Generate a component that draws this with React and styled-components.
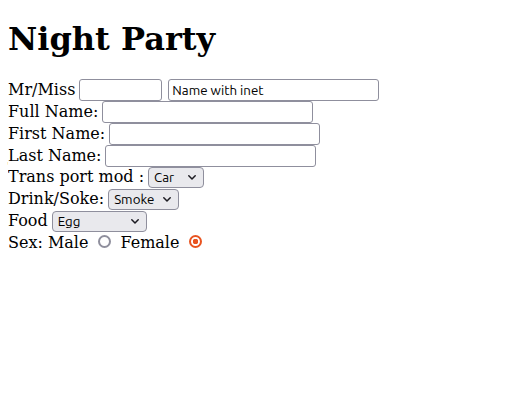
import React from "react";
import styled, { createGlobalStyle } from "styled-components";

const Global = createGlobalStyle`
  body {
    margin: 8px;
    font-family: "DejaVu Serif", serif;
    font-size: 16px;
    color: #000;
    background: #fff;
  }
`;

const Title = styled.h1`
  font-family: "DejaVu Serif", serif;
  font-size: 32px;
  font-weight: bold;
  margin: 12px 0 21px;
`;

const Form = styled.form`
  margin: 0;
  display: flex;
  flex-direction: column;
`;

const Row = styled.div`
  display: flex;
  align-items: baseline;
  gap: 4px;
  height: 22px;
  white-space: pre;
`;

const Label = styled.span`
  font-family: "DejaVu Serif", serif;
  font-size: 16px;
`;

const controlFont = `Ubuntu, "Noto Sans", "DejaVu Sans", sans-serif`;

const TextInput = styled.input`
  box-sizing: border-box;
  width: ${(p) => p.$w}px;
  height: 22px;
  margin: 0 0 0 ${(p) => p.$ml || 0}px;
  padding: 0 3px;
  border: 1px solid #8f8f9d;
  border-radius: 3px;
  background: #fff;
  color: #000;
  font-family: ${controlFont};
  font-size: 13.33px;
  outline: none;
`;

const chevron = encodeURIComponent(
  `<svg xmlns="http://www.w3.org/2000/svg" width="8" height="5" viewBox="0 0 8 5"><path d="M0.8 0.8l3.2 3.2 3.2-3.2" fill="none" stroke="#1c1b22" stroke-width="1.5" stroke-linecap="round" stroke-linejoin="round"/></svg>`
);

const Select = styled.select`
  appearance: none;
  -webkit-appearance: none;
  box-sizing: border-box;
  width: ${(p) => p.$w}px;
  height: 21px;
  margin: 0;
  padding: 0 18px 0 5px;
  border: 1px solid #8f8f9d;
  border-radius: 4px;
  background-color: #e9e9ed;
  background-image: url("data:image/svg+xml,${chevron}");
  background-repeat: no-repeat;
  background-position: right 7px center;
  color: #000;
  font-family: ${controlFont};
  font-size: 13.33px;
  outline: none;
`;

const Radio = styled.input`
  appearance: none;
  -webkit-appearance: none;
  box-sizing: border-box;
  width: 13px;
  height: 13px;
  margin: 0 ${(p) => p.$mr || 0}px 0 ${(p) => p.$ml || 0}px;
  border: 2px solid #8f8f9d;
  border-radius: 50%;
  background: #fff;
  outline: none;

  &:checked {
    border-color: #e95420;
    background: radial-gradient(circle, #e95420 0 2.6px, #fff 3px);
  }
`;

export default function App() {
  return (
    <>
      <Global />
      <Title>Night Party</Title>
      <Form>
        <Row>
          <Label>Mr/Miss</Label>
          <TextInput type="text" $w={83} />
          <TextInput type="text" $w={211} $ml={2} defaultValue="Name with inet" />
        </Row>
        <Row>
          <Label>Full Name:</Label>
          <TextInput type="text" $w={211} />
        </Row>
        <Row>
          <Label>First Name:</Label>
          <TextInput type="text" $w={211} />
        </Row>
        <Row>
          <Label>Last Name:</Label>
          <TextInput type="text" $w={211} />
        </Row>
        <Row>
          <Label>Trans port mod :</Label>
          <Select $w={56} defaultValue="Car">
            <option>Car</option>
            <option>Bus</option>
          </Select>
        </Row>
        <Row>
          <Label>Drink/Soke:</Label>
          <Select $w={71} defaultValue="Smoke">
            <option>Smoke</option>
            <option>Drink</option>
          </Select>
        </Row>
        <Row>
          <Label>Food</Label>
          <Select $w={95} defaultValue="Egg">
            <option>Egg</option>
            <option>Chicken</option>
          </Select>
        </Row>
        <Row>
          <Label>Sex: Male</Label>
          <Radio type="radio" name="sex" $ml={6} $mr={5} />
          <Label>Female</Label>
          <Radio type="radio" name="sex" $ml={6} defaultChecked />
        </Row>
      </Form>
    </>
  );
}
